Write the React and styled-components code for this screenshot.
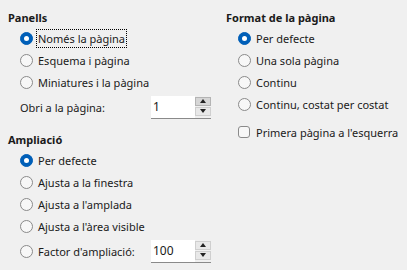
import React from 'react'
import styled, { createGlobalStyle } from 'styled-components'

const GlobalStyle = createGlobalStyle`
  html, body {
    margin: 0;
    padding: 0;
    background: #f0f0f0;
  }
  body {
    font-family: "Noto Sans", "Open Sans", sans-serif;
    font-size: 11px;
    color: #1a1a1a;
  }
`

const Page = styled.div`
  width: 407px;
  height: 270px;
  box-sizing: border-box;
  padding: 7px 0 0 8px;
  display: grid;
  grid-template-columns: 218px 1fr;
  overflow: hidden;
`

const Column = styled.div`
  display: flex;
  flex-direction: column;
`

const SectionTitle = styled.div`
  height: 20px;
  display: flex;
  align-items: center;
  font-weight: bold;
  margin-top: ${p => p.$gap || 0}px;
`

const Row = styled.div`
  height: ${p => p.$h || 22}px;
  display: flex;
  align-items: center;
  padding-left: 12px;
  margin-top: ${p => p.$gap || 0}px;
`

const Radio = styled.span`
  width: 13px;
  height: 13px;
  box-sizing: border-box;
  border-radius: 50%;
  flex: none;
  margin-right: 5px;
  display: flex;
  align-items: center;
  justify-content: center;
  background: ${p => (p.$on ? '#005fb8' : '#f7f7f7')};
  border: 1px solid ${p => (p.$on ? '#005fb8' : '#8a8a8a')};
  &::after {
    content: '';
    display: ${p => (p.$on ? 'block' : 'none')};
    width: 5px;
    height: 5px;
    border-radius: 50%;
    background: #fff;
  }
`

const Check = styled.span`
  width: 12px;
  height: 12px;
  box-sizing: border-box;
  border-radius: 3px;
  border: 1px solid #8a8a8a;
  background: #f7f7f7;
  flex: none;
  margin-right: 6px;
`

const Label = styled.span`
  white-space: nowrap;
  padding: 1px 1px;
  border: 1px dotted ${p => (p.$focus ? '#000' : 'transparent')};
  margin-left: -2px;
`

const FieldLabel = styled.span`
  width: ${p => p.$w || 131}px;
  white-space: nowrap;
`

const Spin = styled.div`
  display: flex;
  height: 22px;
  border-bottom: 1px solid #8a8a8a;
`

const SpinInput = styled.div`
  width: 42px;
  background: #fff;
  padding-left: 2px;
  display: flex;
  align-items: center;
  font-size: 12px;
`

const SpinButtons = styled.div`
  width: 16px;
  display: flex;
  flex-direction: column;
  justify-content: center;
  gap: 1px;
  padding: 1px 0 2px;
`

const SpinButton = styled.div`
  flex: 1;
  background: ${p => (p.$hot ? '#d6d6d6' : '#e8e8e8')};
  border: 1px solid ${p => (p.$hot ? '#b4b4b4' : '#cfcfcf')};
  display: flex;
  align-items: center;
  justify-content: center;
  &::after {
    content: '';
    width: 0;
    height: 0;
    border-left: 3.5px solid transparent;
    border-right: 3.5px solid transparent;
    ${p => (p.$down
      ? 'border-top: 4px solid #222;'
      : 'border-bottom: 4px solid #222;')}
  }
`

const RadioRow = ({ on, focus, children }) => (
  <Row>
    <Radio $on={on} />
    <Label $focus={focus}>{children}</Label>
  </Row>
)

const SpinBox = ({ value, hot }) => (
  <Spin>
    <SpinInput>{value}</SpinInput>
    <SpinButtons>
      <SpinButton $hot={hot} />
      <SpinButton $down />
    </SpinButtons>
  </Spin>
)

export default function App() {
  return (
    <>
      <GlobalStyle />
      <Page>
        <Column>
          <SectionTitle>Panells</SectionTitle>
          <RadioRow on focus>Només la pàgina</RadioRow>
          <RadioRow>Esquema i pàgina</RadioRow>
          <RadioRow>Miniatures i la pàgina</RadioRow>
          <Row $h={28}>
            <FieldLabel>Obri a la pàgina:</FieldLabel>
            <SpinBox value="1" hot />
          </Row>
          <SectionTitle $gap={8}>Ampliació</SectionTitle>
          <RadioRow on>Per defecte</RadioRow>
          <RadioRow>Ajusta a la finestra</RadioRow>
          <RadioRow>Ajusta a l'amplada</RadioRow>
          <RadioRow>Ajusta a l'àrea visible</RadioRow>
          <Row $h={28}>
            <Radio />
            <FieldLabel $w={113}>Factor d'ampliació:</FieldLabel>
            <SpinBox value="100" />
          </Row>
        </Column>
        <Column>
          <SectionTitle>Format de la pàgina</SectionTitle>
          <RadioRow on>Per defecte</RadioRow>
          <RadioRow>Una sola pàgina</RadioRow>
          <RadioRow>Continu</RadioRow>
          <RadioRow>Continu, costat per costat</RadioRow>
          <Row $gap={6}>
            <Check />
            <Label>Primera pàgina a l'esquerra</Label>
          </Row>
        </Column>
      </Page>
    </>
  )
}
